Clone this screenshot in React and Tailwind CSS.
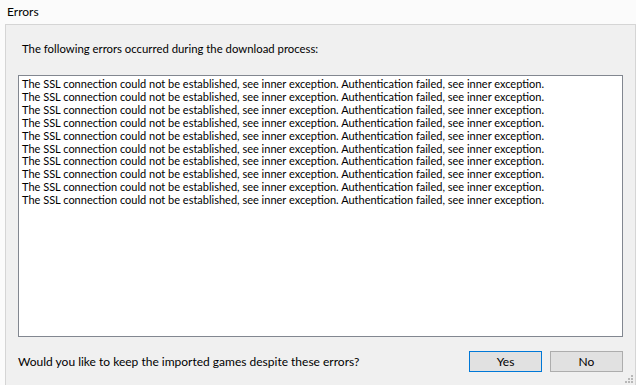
const LINE = 'The SSL connection could not be established, see inner exception. Authentication failed, see inner exception.'

export default function App() {
  const lines = Array.from({ length: 10 }, () => LINE)
  return (
    <div
      className="w-[636px] h-[385px] bg-[#fbfbfb] flex flex-col text-[12px] text-black overflow-hidden"
      style={{ fontFamily: 'Lato, "Noto Sans", sans-serif' }}
    >
      {/* Title */}
      <div className="h-[24px] pl-[7px] flex items-center leading-none">Errors</div>

      {/* Dialog body */}
      <div className="flex-1 ml-[5px] bg-[#f0f0f0] border-t border-l border-r border-[#d5d5d5] flex flex-col relative">
        <div className="pl-[16px] pt-[17px] h-[50px] leading-[14px] text-[11.35px]">
          The following errors occurred during the download process:
        </div>

        <div className="ml-[12px] mr-[12px] h-[262px] bg-white border border-[#828790] pl-[3px] pt-[2px] text-[11px] leading-[12.9px] whitespace-nowrap overflow-hidden">
          {lines.map((l, i) => (
            <div key={i}>{l}</div>
          ))}
        </div>

        <div className="flex items-center pl-[12px] pr-[12px] pt-[14px]">
          <div className="flex-1 leading-none">Would you like to keep the imported games despite these errors?</div>
          <div className="flex gap-[8px]">
            <button className="w-[73px] h-[21px] bg-[#e1e1e1] border border-[#0078d7] leading-none">Yes</button>
            <button className="w-[73px] h-[21px] bg-[#e1e1e1] border border-[#adadad] leading-none">No</button>
          </div>
        </div>

        {/* Resize grip */}
        <svg className="absolute right-[1px] bottom-[1px]" width="10" height="10" viewBox="0 0 10 10">
          <rect x="7" y="1" width="2" height="2" fill="#b8b8b8" />
          <rect x="4" y="4" width="2" height="2" fill="#b8b8b8" />
          <rect x="7" y="4" width="2" height="2" fill="#b8b8b8" />
          <rect x="1" y="7" width="2" height="2" fill="#b8b8b8" />
          <rect x="4" y="7" width="2" height="2" fill="#b8b8b8" />
          <rect x="7" y="7" width="2" height="2" fill="#b8b8b8" />
        </svg>
      </div>
    </div>
  )
}
